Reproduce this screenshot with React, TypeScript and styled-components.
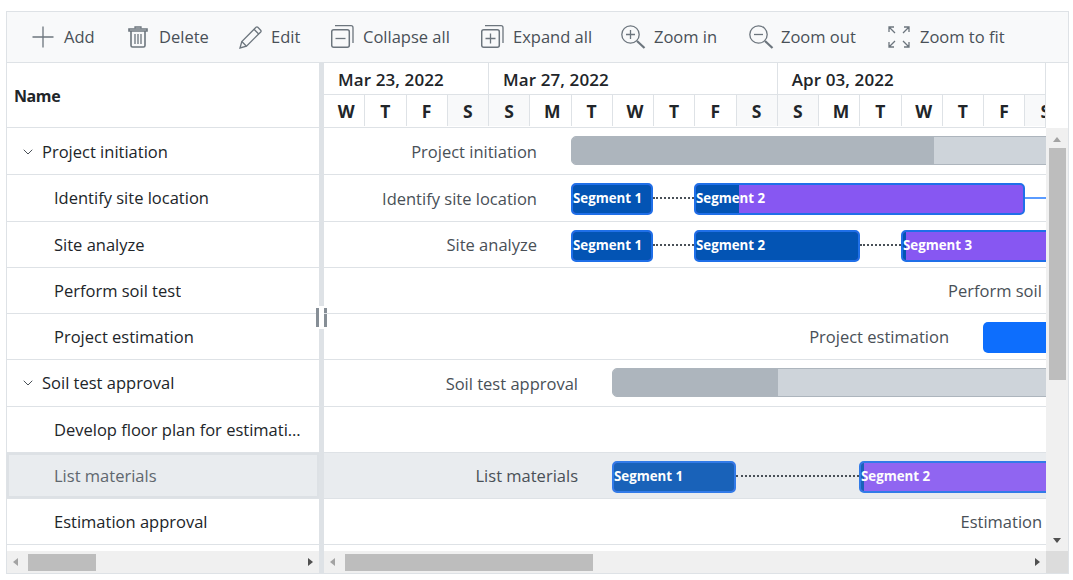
import { ReactNode } from 'react';
import styled, { createGlobalStyle } from 'styled-components';
import { ChevronDown } from 'lucide-react';

const COL = 41.25;
const DAYS = ['W', 'T', 'F', 'S', 'S', 'M', 'T', 'W', 'T', 'F', 'S', 'S', 'M', 'T', 'W', 'T', 'F', 'S'];
const WEEKS = [
  { label: 'Mar 23, 2022', days: 4 },
  { label: 'Mar 27, 2022', days: 7 },
  { label: 'Apr 03, 2022', days: 7 },
];

type Segment = { left: number; width: number; progress: number; label: string };
type Task = {
  name: string;
  parent?: boolean;
  selected?: boolean;
  label?: { text: string; end: number };
  summary?: { left: number; width: number; progress: number };
  segments?: Segment[];
  links?: { left: number; width: number }[];
  tail?: { left: number; width: number };
  plain?: { left: number; width: number };
};

const TASKS: Task[] = [
  {
    name: 'Project initiation',
    parent: true,
    label: { text: 'Project initiation', end: 213 },
    summary: { left: 247, width: 560, progress: 362 },
  },
  {
    name: 'Identify site location',
    label: { text: 'Identify site location', end: 213 },
    segments: [
      { left: 247, width: 82, progress: 82, label: 'Segment 1' },
      { left: 370, width: 331, progress: 43, label: 'Segment 2' },
    ],
    links: [{ left: 329, width: 41 }],
    tail: { left: 701, width: 60 },
  },
  {
    name: 'Site analyze',
    label: { text: 'Site analyze', end: 213 },
    segments: [
      { left: 247, width: 82, progress: 82, label: 'Segment 1' },
      { left: 370, width: 166, progress: 166, label: 'Segment 2' },
      { left: 577, width: 250, progress: 3, label: 'Segment 3' },
    ],
    links: [
      { left: 329, width: 41 },
      { left: 536, width: 41 },
    ],
  },
  { name: 'Perform soil test', label: { text: 'Perform soil test', end: 751 } },
  {
    name: 'Project estimation',
    label: { text: 'Project estimation', end: 625 },
    plain: { left: 659, width: 120 },
  },
  {
    name: 'Soil test approval',
    parent: true,
    label: { text: 'Soil test approval', end: 254 },
    summary: { left: 288, width: 560, progress: 165 },
  },
  { name: 'Develop floor plan for estimation' },
  {
    name: 'List materials',
    selected: true,
    label: { text: 'List materials', end: 254 },
    segments: [
      { left: 288, width: 124, progress: 124, label: 'Segment 1' },
      { left: 535, width: 300, progress: 3, label: 'Segment 2' },
    ],
    links: [{ left: 412, width: 123 }],
  },
  { name: 'Estimation approval', label: { text: 'Estimation approval', end: 790 } },
];

const GlobalStyle = createGlobalStyle`
  html, body {
    margin: 0;
    padding: 0;
    background: #fff;
  }
  body {
    font-family: "Open Sans", "Noto Sans", sans-serif;
    font-size: 16.5px;
    color: #212529;
  }
`;

const Gantt = styled.div`
  box-sizing: border-box;
  width: 1063px;
  height: 563px;
  margin: 11px 0 0 6px;
  border: 1px solid #dee2e6;
  display: flex;
  flex-direction: column;
  overflow: hidden;
`;

const Toolbar = styled.div`
  flex: none;
  height: 50px;
  border-bottom: 1px solid #dee2e6;
  background: #f8f9fa;
  display: flex;
  align-items: center;
  padding-left: 25px;
`;

const ToolButton = styled.div<{ $width: number; $gap: number }>`
  width: ${(p) => p.$width}px;
  flex: none;
  display: flex;
  align-items: center;
  gap: ${(p) => p.$gap}px;
  color: #495057;
  white-space: nowrap;

  span {
    margin-top: -2px;
  }

  svg {
    flex: none;
    fill: none;
    stroke: #6c757d;
    stroke-width: 1.3;
  }
`;

const Panes = styled.div`
  flex: 1;
  min-height: 0;
  display: flex;
`;

const TreePane = styled.div`
  flex: none;
  width: 312px;
  display: flex;
  flex-direction: column;
`;

const Splitter = styled.div`
  flex: none;
  width: 5px;
  background: #dee2e6;
  position: relative;
`;

const SplitHandle = styled.div`
  position: absolute;
  top: 243px;
  left: -3px;
  width: 11px;
  height: 23px;
  box-sizing: border-box;
  background: #fff;
  padding: 2px 0;
  display: flex;
  justify-content: space-between;

  &::before,
  &::after {
    content: '';
    width: 3px;
    background: #868e96;
  }
`;

const ChartPane = styled.div`
  flex: 1;
  min-width: 0;
  display: grid;
  grid-template-columns: 722px 1fr;
  grid-template-rows: 65px 1fr 22px;
`;

const TreeHeader = styled.div`
  flex: none;
  box-sizing: border-box;
  height: 65px;
  border-bottom: 1px solid #dee2e6;
  display: flex;
  align-items: center;
  padding: 2px 0 0 7px;
  font-size: 16px;
  font-weight: 700;
  letter-spacing: -0.4px;
  color: #212529;
`;

const TreeRows = styled.div`
  flex: 1;
  min-height: 0;
  overflow: hidden;
  padding-top: 1px;
`;

const Row = styled.div<{ $selected?: boolean }>`
  box-sizing: border-box;
  height: 46.25px;
  border-bottom: 1px solid #dee2e6;
  background: ${(p) => (p.$selected ? '#e9ecef' : 'transparent')};
`;

const TreeRow = styled(Row)<{ $indent: number }>`
  display: flex;
  align-items: center;
  padding: 0 16px 0 ${(p) => p.$indent}px;
  box-shadow: ${(p) => (p.$selected ? 'inset 0 0 0 2px #dde1e5' : 'none')};
  color: ${(p) => (p.$selected ? '#5f676e' : '#212529')};
`;

const Chevron = styled.span`
  flex: none;
  width: 17px;
  margin-right: 6px;
  display: flex;
  justify-content: center;
  color: #495057;
`;

const TaskName = styled.span`
  overflow: hidden;
  white-space: nowrap;
  text-overflow: ellipsis;
`;

const TimelineHeader = styled.div`
  grid-column: 1;
  grid-row: 1;
  overflow: hidden;
  border-right: 1px solid #dee2e6;
  border-bottom: 1px solid #dee2e6;
  width: 722px;
  box-sizing: border-box;
`;

const WeekRow = styled.div`
  display: flex;
  height: 32px;
  border-bottom: 1px solid #dee2e6;
  box-sizing: border-box;
`;

const Week = styled.div<{ $days: number }>`
  flex: none;
  width: ${(p) => p.$days * COL}px;
  box-sizing: border-box;
  border-right: 1px solid #dee2e6;
  padding: 2px 0 0 14px;
  display: flex;
  align-items: center;
  font-size: 17px;
  font-weight: 600;
  letter-spacing: 0.1px;
  color: #212529;
`;

const DayRow = styled.div`
  display: flex;
  height: 31px;
`;

const Day = styled.div<{ $weekend: boolean; $wide: boolean }>`
  flex: none;
  width: ${COL}px;
  box-sizing: border-box;
  border-right: 1px solid #dee2e6;
  padding-left: ${(p) => (p.$wide ? 4 : 0)}px;
  background: ${(p) => (p.$weekend ? '#f8f9fa' : '#fff')};
  display: flex;
  align-items: center;
  justify-content: center;
  font-weight: 700;
  font-size: 17.5px;
  color: #212529;
`;

const HeaderGap = styled.div`
  grid-column: 2;
  grid-row: 1;
`;

const ChartRows = styled.div`
  grid-column: 1;
  grid-row: 2;
  overflow: hidden;
  min-height: 0;
  padding-top: 1px;
`;

const ChartRow = styled(Row)`
  position: relative;
  overflow: hidden;
`;

const BarLabel = styled.span<{ $end: number }>`
  position: absolute;
  top: 12.4px;
  left: ${(p) => p.$end}px;
  transform: translateX(-100%);
  white-space: nowrap;
  color: #495057;
  line-height: 22px;
`;

const SummaryBar = styled.div<{ $left: number; $width: number }>`
  position: absolute;
  top: 7.4px;
  left: ${(p) => p.$left}px;
  width: ${(p) => p.$width}px;
  height: 29px;
  box-sizing: border-box;
  border: 1px solid #adb5bd;
  border-radius: 5px;
  background: #ced4da;
  overflow: hidden;
`;

const SummaryProgress = styled.div<{ $width: number }>`
  width: ${(p) => p.$width}px;
  height: 100%;
  background: #adb5bd;
`;

const SegmentBar = styled.div<{ $left: number; $width: number; $dimmed?: boolean }>`
  position: absolute;
  top: 8px;
  left: ${(p) => p.$left}px;
  width: ${(p) => p.$width}px;
  height: 32px;
  box-sizing: border-box;
  border: 2px solid #1f6fe8;
  border-radius: 5px;
  background: #8757f2;
  overflow: hidden;
  opacity: ${(p) => (p.$dimmed ? 0.9 : 1)};
`;

const SegmentProgress = styled.div<{ $width: number }>`
  position: absolute;
  top: 0;
  left: 0;
  bottom: 0;
  width: ${(p) => p.$width}px;
  background: #0354b4;
`;

const SegmentText = styled.span`
  position: absolute;
  top: 0;
  left: 0;
  line-height: 27px;
  font-size: 13.3px;
  font-weight: 700;
  color: #fff;
  white-space: nowrap;
`;

const DottedLink = styled.div<{ $left: number; $width: number }>`
  position: absolute;
  top: 22px;
  left: ${(p) => p.$left}px;
  width: ${(p) => p.$width}px;
  border-top: 2px dotted #495057;
`;

const TailLine = styled.div<{ $left: number; $width: number }>`
  position: absolute;
  top: 22px;
  left: ${(p) => p.$left}px;
  width: ${(p) => p.$width}px;
  height: 2px;
  background: #5a9bff;
`;

const PlainBar = styled.div<{ $left: number; $width: number }>`
  position: absolute;
  top: 8px;
  left: ${(p) => p.$left}px;
  width: ${(p) => p.$width}px;
  height: 31px;
  border-radius: 5px;
  background: #0d6efd;
`;

const ScrollTrack = styled.div<{ $vertical?: boolean }>`
  background: #f0f0f0;
  display: flex;
  flex-direction: ${(p) => (p.$vertical ? 'column' : 'row')};
  align-items: center;
  min-height: 0;
`;

const HScroll = styled(ScrollTrack)`
  flex: none;
  height: 22px;
  margin-top: 6px;
  padding: 0 6px;
  box-sizing: border-box;
`;

const ChartHScroll = styled(HScroll)`
  grid-column: 1;
  grid-row: 3;
  margin-top: 0;
  height: 22px;
`;

const VScroll = styled(ScrollTrack)`
  grid-column: 2;
  grid-row: 2;
  padding: 9px 0 8px;
  box-sizing: border-box;
`;

const ScrollCorner = styled.div`
  grid-column: 2;
  grid-row: 3;
  background: #dcdcdc;
`;

const Thumb = styled.div<{ $offset: number; $size: number; $vertical?: boolean }>`
  flex: none;
  background: #bdbdbd;
  ${(p) =>
    p.$vertical
      ? `width: 17px; height: ${p.$size}px; margin-top: ${p.$offset}px;`
      : `height: 17px; width: ${p.$size}px; margin-left: ${p.$offset}px;`}
`;

const Arrow = styled.span<{ $dir: 'left' | 'right' | 'up' | 'down'; $dark?: boolean }>`
  flex: none;
  width: 0;
  height: 0;
  border-style: solid;
  border-color: transparent;
  ${(p) => {
    const color = p.$dark ? '#505050' : '#a3a3a3';
    if (p.$dir === 'left') return `border-width: 4px 5px 4px 0; border-right-color: ${color};`;
    if (p.$dir === 'right') return `border-width: 4px 0 4px 5px; border-left-color: ${color}; margin-left: auto;`;
    if (p.$dir === 'up') return `border-width: 0 4px 5px 4px; border-bottom-color: ${color};`;
    return `border-width: 5px 4px 0 4px; border-top-color: ${color}; margin-top: auto;`;
  }}
`;

const AddIcon = () => (
  <svg width="22" height="22" viewBox="0 0 22 22">
    <path d="M0.5 11H21.5M11 0.5V21.5" />
  </svg>
);

const TrashIcon = () => (
  <svg width="20" height="22" viewBox="0 0 20 22">
    <path d="M7 2.5V1H13V2.5" />
    <path d="M1 3H19V5H1Z" strokeWidth="1.6" />
    <path d="M3 5V19.5C3 20.5 3.6 21 4.5 21H15.5C16.4 21 17 20.5 17 19.5V5" strokeWidth="1.6" />
    <path d="M7 8V18M10 8V18M13 8V18" />
  </svg>
);

const EditIcon = () => (
  <svg width="23" height="23" viewBox="0 0 23 23">
    <path d="M1 22L2.8 15.5L17 1.3C17.6 0.8 18.3 0.8 18.8 1.3L21.7 4.2C22.2 4.7 22.2 5.4 21.7 6L7.5 20.2L1 22Z" />
    <path d="M2.8 15.5L7.5 20.2M15 3.3L19.7 8" />
  </svg>
);

const TreeBoxIcon = ({ plus }: { plus?: boolean }) => (
  <svg width="23" height="24" viewBox="0 0 23 24">
    <rect x="0.7" y="4.7" width="17.6" height="17.6" rx="2" strokeWidth="1.5" />
    <path d="M4 0.7H20C21.2 0.7 22 1.5 22 2.7V18" />
    <path d={plus ? 'M4.5 13.5H14.5M9.5 8.5V18.5' : 'M4.5 13.5H14.5'} />
  </svg>
);

const ZoomIcon = ({ plus }: { plus?: boolean }) => (
  <svg width="25" height="24" viewBox="0 0 25 24">
    <circle cx="9.5" cy="9.5" r="8.7" />
    <path d={plus ? 'M5 9.5H14M9.5 5V14' : 'M5 9.5H14'} />
    <path d="M16 16L23.5 23" strokeWidth="2.2" />
  </svg>
);

const FitIcon = () => (
  <svg width="22" height="22" viewBox="0 0 22 22">
    <path d="M1 6V1H6M1 1L7 7M16 1H21V6M21 1L15 7M1 16V21H6M1 21L7 15M16 21H21V16M21 21L15 15" />
  </svg>
);

const TOOLS: { label: string; icon: ReactNode; width: number; gap: number }[] = [
  { label: 'Add', icon: <AddIcon />, width: 96, gap: 10 },
  { label: 'Delete', icon: <TrashIcon />, width: 111, gap: 11 },
  { label: 'Edit', icon: <EditIcon />, width: 92, gap: 9 },
  { label: 'Collapse all', icon: <TreeBoxIcon />, width: 150, gap: 9 },
  { label: 'Expand all', icon: <TreeBoxIcon plus />, width: 140, gap: 9 },
  { label: 'Zoom in', icon: <ZoomIcon plus />, width: 128, gap: 8 },
  { label: 'Zoom out', icon: <ZoomIcon />, width: 139, gap: 7 },
  { label: 'Zoom to fit', icon: <FitIcon />, width: 130, gap: 10 },
];

const TimelineRow = ({ task }: { task: Task }) => (
  <ChartRow $selected={task.selected}>
    {task.label && <BarLabel $end={task.label.end}>{task.label.text}</BarLabel>}
    {task.summary && (
      <SummaryBar $left={task.summary.left} $width={task.summary.width}>
        <SummaryProgress $width={task.summary.progress} />
      </SummaryBar>
    )}
    {task.links?.map((link) => (
      <DottedLink key={link.left} $left={link.left} $width={link.width} />
    ))}
    {task.tail && <TailLine $left={task.tail.left} $width={task.tail.width} />}
    {task.segments?.map((seg) => (
      <SegmentBar key={seg.left} $left={seg.left} $width={seg.width} $dimmed={task.selected}>
        <SegmentProgress $width={seg.progress} />
        <SegmentText>{seg.label}</SegmentText>
      </SegmentBar>
    ))}
    {task.plain && <PlainBar $left={task.plain.left} $width={task.plain.width} />}
  </ChartRow>
);

export default function App() {
  return (
    <>
      <GlobalStyle />
      <Gantt>
        <Toolbar>
          {TOOLS.map((tool) => (
            <ToolButton key={tool.label} $width={tool.width} $gap={tool.gap}>
              {tool.icon}
              <span>{tool.label}</span>
            </ToolButton>
          ))}
        </Toolbar>
        <Panes>
          <TreePane>
            <TreeHeader>Name</TreeHeader>
            <TreeRows>
              {TASKS.map((task) => (
                <TreeRow key={task.name} $selected={task.selected} $indent={task.parent ? 12 : 47}>
                  {task.parent && (
                    <Chevron>
                      <ChevronDown size={16} strokeWidth={1.5} />
                    </Chevron>
                  )}
                  <TaskName>{task.name}</TaskName>
                </TreeRow>
              ))}
            </TreeRows>
            <HScroll>
              <Arrow $dir="left" />
              <Thumb $offset={10} $size={68} />
              <Arrow $dir="right" $dark />
            </HScroll>
          </TreePane>
          <Splitter>
            <SplitHandle />
          </Splitter>
          <ChartPane>
            <TimelineHeader>
              <WeekRow>
                {WEEKS.map((week) => (
                  <Week key={week.label} $days={week.days}>
                    {week.label}
                  </Week>
                ))}
              </WeekRow>
              <DayRow>
                {DAYS.map((day, i) => (
                  <Day key={i} $weekend={day === 'S'} $wide={day === 'W' || day === 'M'}>
                    {day}
                  </Day>
                ))}
              </DayRow>
            </TimelineHeader>
            <HeaderGap />
            <ChartRows>
              {TASKS.map((task) => (
                <TimelineRow key={task.name} task={task} />
              ))}
            </ChartRows>
            <VScroll $vertical>
              <Arrow $dir="up" />
              <Thumb $vertical $offset={6} $size={232} />
              <Arrow $dir="down" $dark />
            </VScroll>
            <ChartHScroll>
              <Arrow $dir="left" />
              <Thumb $offset={10} $size={248} />
              <Arrow $dir="right" $dark />
            </ChartHScroll>
            <ScrollCorner />
          </ChartPane>
        </Panes>
      </Gantt>
    </>
  );
}
